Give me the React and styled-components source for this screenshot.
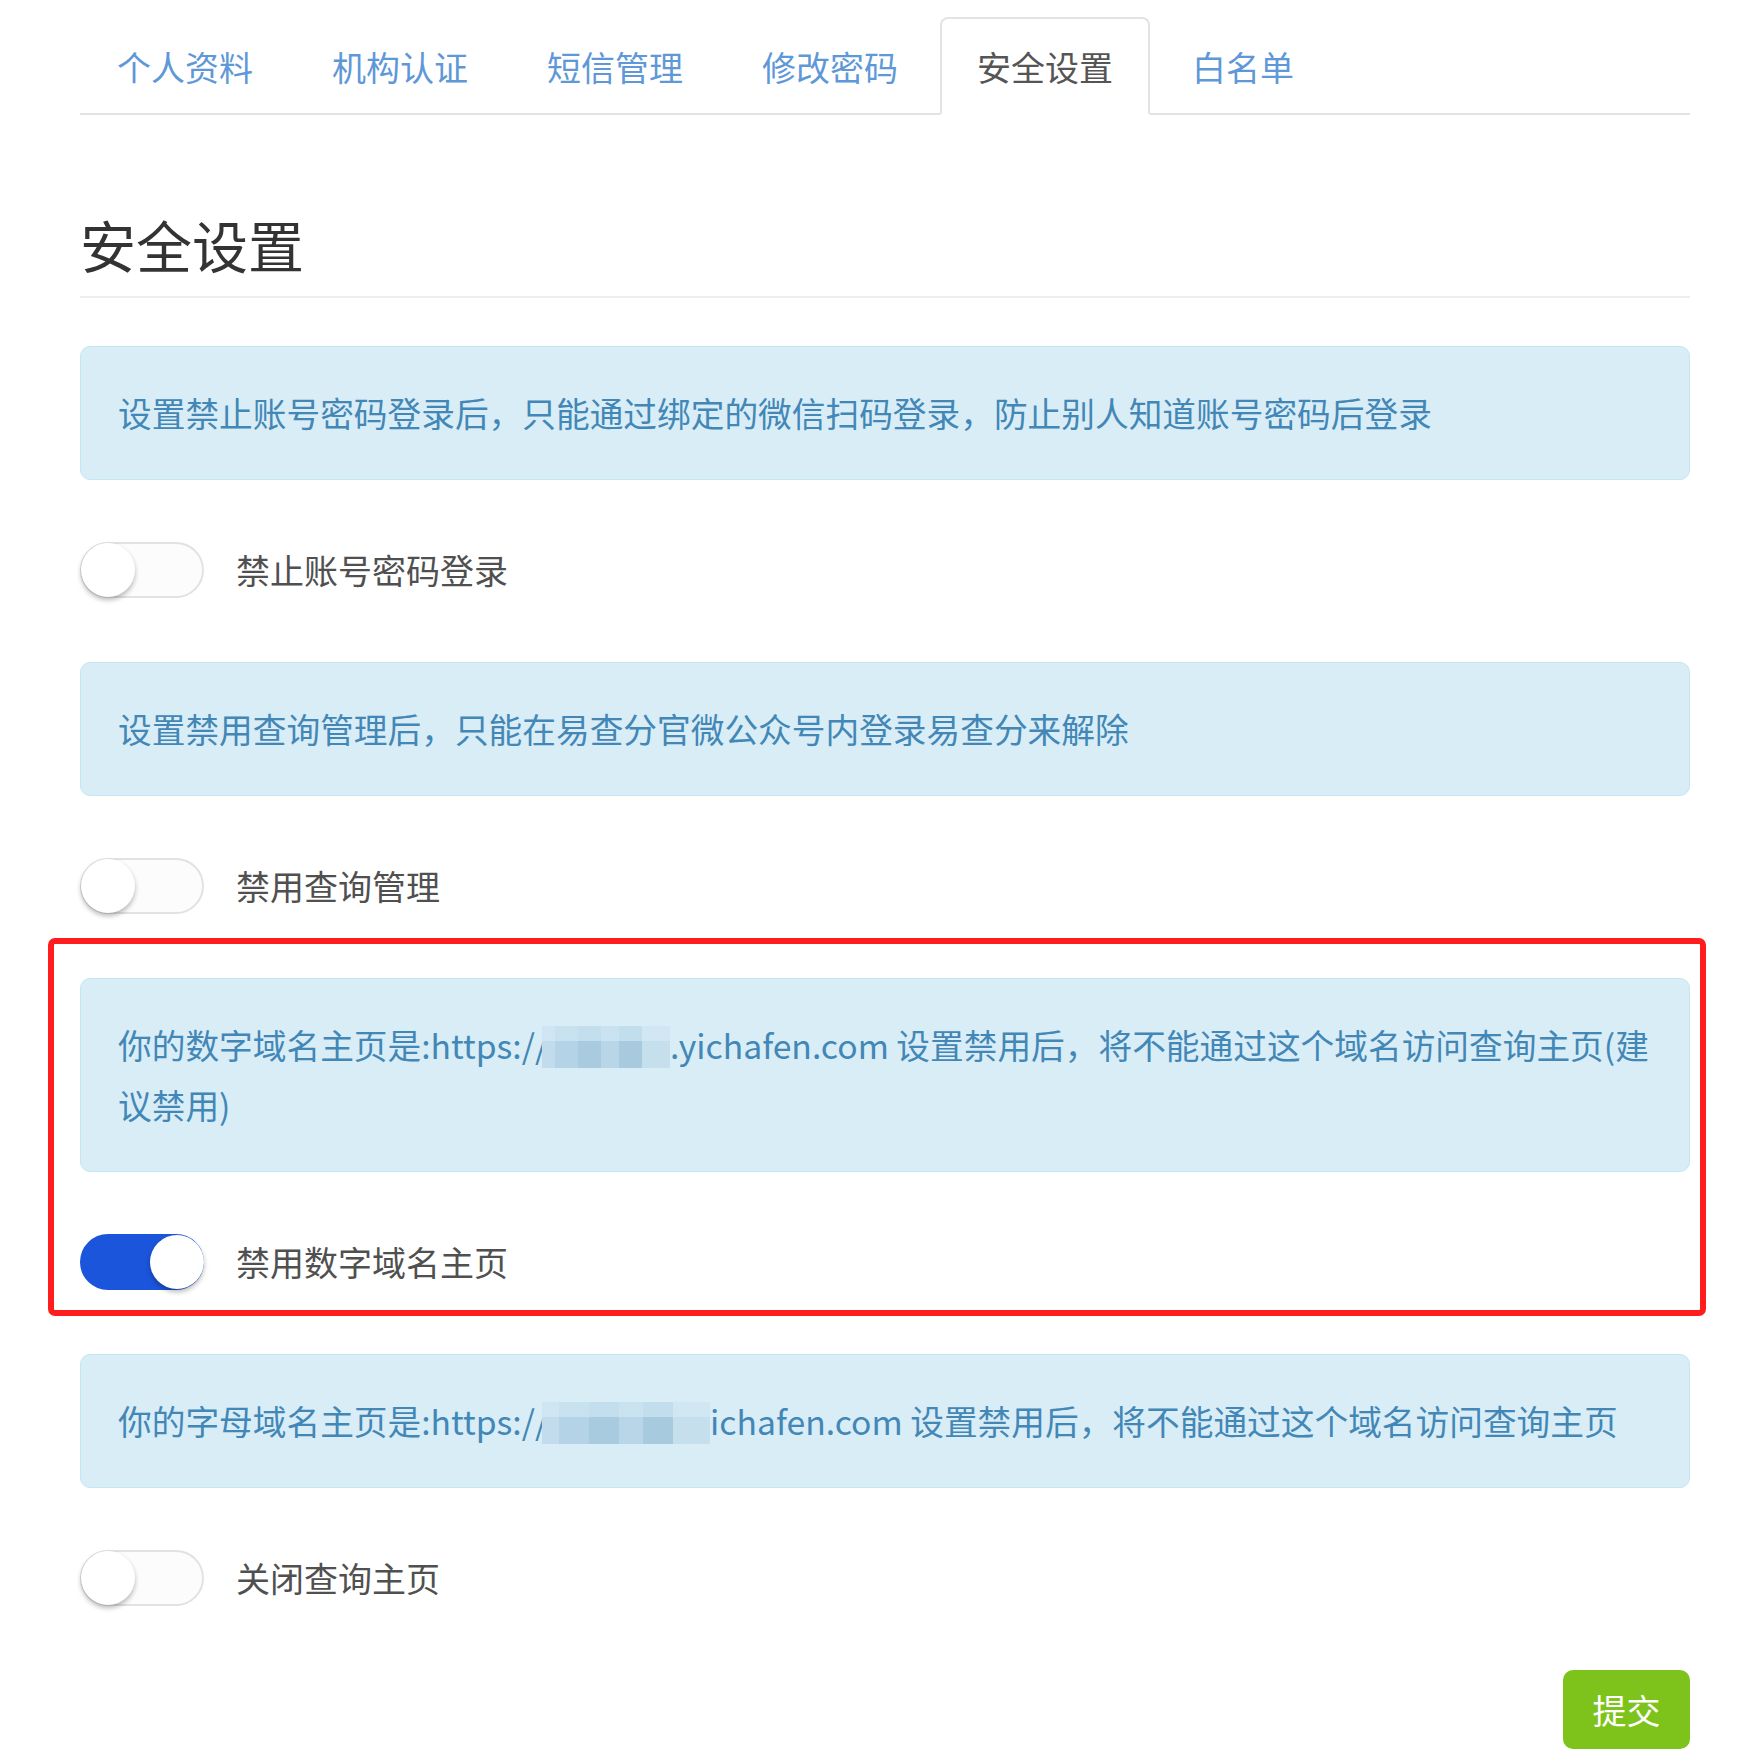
import React, { useState } from "react";
import styled, { createGlobalStyle, css } from "styled-components";

const GlobalStyle = createGlobalStyle`
  html, body {
    margin: 0;
    padding: 0;
    background: #fff;
  }
  body {
    font-family: "Noto Sans CJK SC", "Microsoft YaHei", "Noto Sans", sans-serif;
    color: #555;
  }
`;

const Page = styled.div`
  width: 1610px;
  padding: 0 70px 14px 80px;
`;

const Tabs = styled.ul`
  display: flex;
  list-style: none;
  margin: 17px 0 0;
  padding: 0;
  border-bottom: 2px solid #e3e3e3;
`;

const Tab = styled.li`
  height: 94px;
  padding: 0 35px;
  margin: 0 5px -2px 0;
  display: flex;
  align-items: center;
  font-size: 34px;
  color: #5f98d7;
  border: 2px solid transparent;
  border-radius: 8px 8px 0 0;
  cursor: pointer;

  ${(p) =>
    p.$active &&
    css`
      color: #555;
      background: #fff;
      border-color: #e3e3e3;
      border-bottom-color: #fff;
    `}
`;

const Title = styled.h1`
  margin: 98px 0 48px;
  padding-bottom: 21px;
  border-bottom: 2px solid #eee;
  font-size: 56px;
  line-height: 62px;
  font-weight: 400;
  color: #333;
`;

const Alert = styled.div`
  margin-bottom: 62px;
  padding: 36px 37px;
  border: 1px solid #c4e6f2;
  border-radius: 10px;
  background: #d9edf7;
  color: #4287b6;
  font-size: 33.7px;
  line-height: 60px;
`;

/* blurred-out subdomain in the screenshot */
const Redacted = styled.span`
  display: inline-block;
  width: ${(p) => p.$w}px;
  height: 42px;
  margin-left: -6px;
  vertical-align: -9px;
  background:
    linear-gradient(180deg, rgba(217, 237, 247, 0.55) 0 35%, transparent 35% 100%),
    linear-gradient(90deg,
      #c3dced 0 10%, #b4d3e6 10% 28%, #a8cbe0 28% 46%,
      #b8d6e7 46% 60%, #a7cadf 60% 78%, #c6dfed 78% 100%);
`;

const ToggleRow = styled.label`
  display: flex;
  align-items: center;
  gap: 32px;
  margin-bottom: 64px;
  font-size: 34px;
  line-height: 56px;
  color: #505050;
  cursor: pointer;
`;

const Track = styled.span`
  position: relative;
  flex: none;
  width: 124px;
  height: 56px;
  box-sizing: border-box;
  border-radius: 28px;
  border: 2px solid ${(p) => (p.$on ? "#1b55dc" : "#e2e2e2")};
  background: ${(p) => (p.$on ? "#1b55dc" : "#fcfcfc")};
`;

const Knob = styled.span`
  position: absolute;
  top: -1px;
  left: ${(p) => (p.$on ? "68px" : "-1px")};
  width: 54px;
  height: 54px;
  border-radius: 50%;
  background: #fff;
  box-shadow: 0 3px 5px rgba(0, 0, 0, 0.28);
`;

const Highlight = styled.div`
  position: relative;

  &::after {
    content: "";
    position: absolute;
    top: -40px;
    left: -32px;
    right: -16px;
    bottom: -26px;
    border: 6px solid #ff1d1d;
    border-radius: 7px;
    pointer-events: none;
  }
`;

const Footer = styled.div`
  display: flex;
  justify-content: flex-end;
`;

const Submit = styled.button`
  width: 127px;
  height: 79px;
  border: none;
  border-radius: 10px;
  background: #7dc31b;
  color: #fff;
  font-family: inherit;
  font-size: 34px;
  cursor: pointer;
`;

const tabs = ["个人资料", "机构认证", "短信管理", "修改密码", "安全设置", "白名单"];

function Toggle({ on, label, onChange }) {
  return (
    <ToggleRow onClick={onChange}>
      <Track $on={on}>
        <Knob $on={on} />
      </Track>
      {label}
    </ToggleRow>
  );
}

export default function App() {
  const [state, setState] = useState({
    pwd: false,
    query: false,
    digit: true,
    home: false,
  });
  const flip = (k) => () => setState((s) => ({ ...s, [k]: !s[k] }));

  return (
    <Page>
      <GlobalStyle />
      <Tabs>
        {tabs.map((t) => (
          <Tab key={t} $active={t === "安全设置"}>
            {t}
          </Tab>
        ))}
      </Tabs>

      <Title>安全设置</Title>

      <Alert>设置禁止账号密码登录后，只能通过绑定的微信扫码登录，防止别人知道账号密码后登录</Alert>
      <Toggle on={state.pwd} label="禁止账号密码登录" onChange={flip("pwd")} />

      <Alert>设置禁用查询管理后，只能在易查分官微公众号内登录易查分来解除</Alert>
      <Toggle on={state.query} label="禁用查询管理" onChange={flip("query")} />

      <Highlight>
        <Alert>
          你的数字域名主页是:https://<Redacted $w={128} />.yichafen.com
          设置禁用后，将不能通过这个域名访问查询主页(建议禁用)
        </Alert>
        <Toggle on={state.digit} label="禁用数字域名主页" onChange={flip("digit")} />
      </Highlight>

      <Alert>
        你的字母域名主页是:https://<Redacted $w={168} />ichafen.com
        设置禁用后，将不能通过这个域名访问查询主页
      </Alert>
      <Toggle on={state.home} label="关闭查询主页" onChange={flip("home")} />

      <Footer>
        <Submit>提交</Submit>
      </Footer>
    </Page>
  );
}
